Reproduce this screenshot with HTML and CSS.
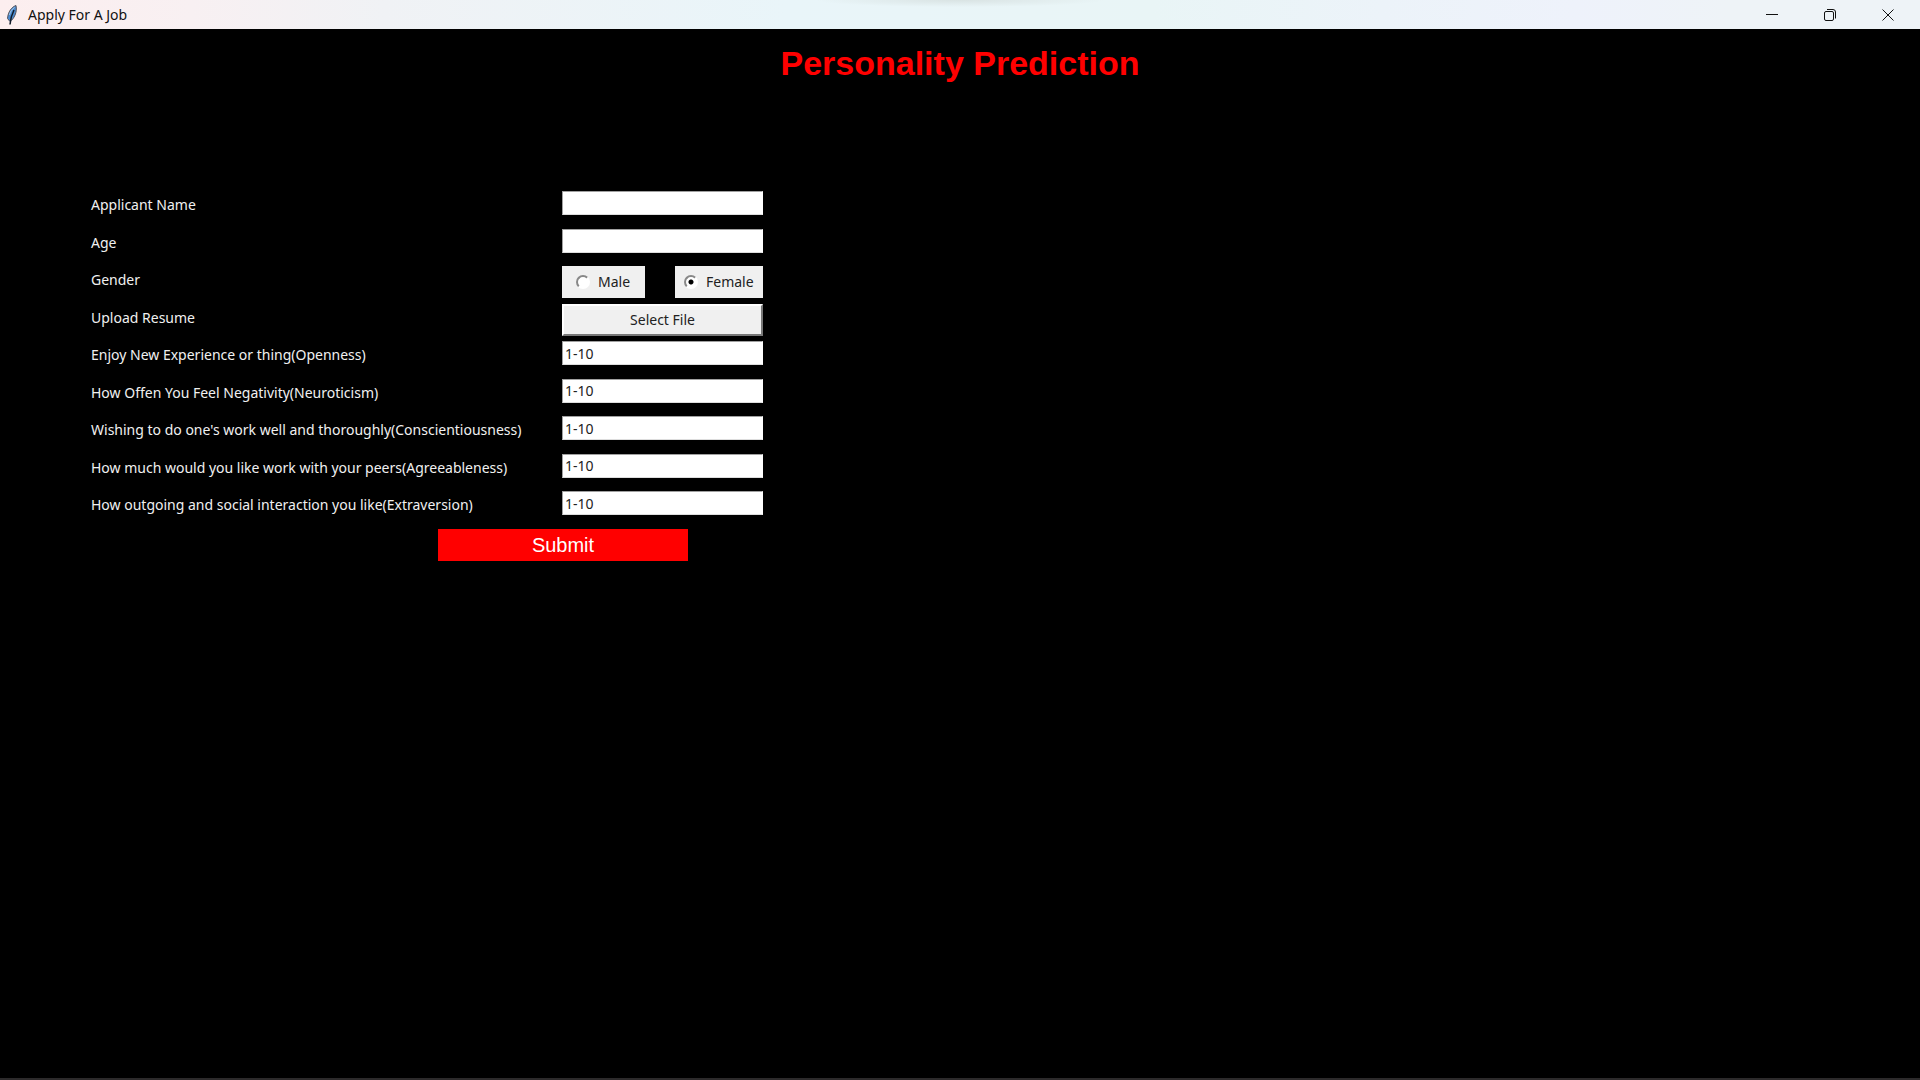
FILE: index.html
```
<!DOCTYPE html>
<html lang="en">
<head>
<meta charset="utf-8">
<title>Apply For A Job</title>
<link rel="stylesheet" href="styles.css">
</head>
<body>
<div class="window">
  <header class="titlebar">
    <svg class="feather" viewBox="0 0 12 20" aria-hidden="true">
      <path d="M10 .5C5.500 2 2 7 1.500 13.500L4 16.500C8 14 11.500 7 10 .5Z" fill="#4b8ad0" stroke="#55535c"/>
      <path d="M8 5C6.500 8 4.500 12 4 19.500" fill="none" stroke="#101a28" stroke-width="1.500"/>
      <path d="M8.500 2.500C6 4 4 7 3.500 10" fill="none" stroke="#a9cdeb"/>
    </svg>
    <span class="caption">Apply For A Job</span>
    <div class="controls">
      <button class="control" type="button" aria-label="Minimize"><svg viewBox="0 0 12 12"><path d="M0 5.500H12"/></svg></button>
      <button class="control" type="button" aria-label="Restore"><svg viewBox="0 0 12 12"><rect x=".5" y="2.500" width="9" height="9" rx="1.500"/><path d="M3 .5H9Q11.500.5 11.500 3V9.500"/></svg></button>
      <button class="control" type="button" aria-label="Close"><svg viewBox="0 0 12 12"><path d="M.5.5L11.500 11.500M11.500.5L.5 11.500"/></svg></button>
    </div>
  </header>
  <main class="content">
    <h1 class="heading">Personality Prediction</h1>
    <form class="form">
      <div class="fields">
        <label class="label" for="name">Applicant Name</label>
        <input class="entry" id="name" type="text">
        <label class="label" for="age">Age</label>
        <input class="entry" id="age" type="text">
        <span class="label" id="gender">Gender</span>
        <div class="choices" role="radiogroup" aria-labelledby="gender">
          <label class="choice"><input class="radio" type="radio" name="gender">Male</label>
          <label class="choice"><input class="radio" type="radio" name="gender" checked>Female</label>
        </div>
        <label class="label" for="resume">Upload Resume</label>
        <button class="file" id="resume" type="button">Select File</button>
        <label class="label" for="openness">Enjoy New Experience or thing(Openness)</label>
        <input class="entry" id="openness" type="text" value="1-10">
        <label class="label" for="neuroticism">How Offen You Feel Negativity(Neuroticism)</label>
        <input class="entry" id="neuroticism" type="text" value="1-10">
        <label class="label" for="conscientiousness">Wishing to do one's work well and thoroughly(Conscientiousness)</label>
        <input class="entry" id="conscientiousness" type="text" value="1-10">
        <label class="label" for="agreeableness">How much would you like work with your peers(Agreeableness)</label>
        <input class="entry" id="agreeableness" type="text" value="1-10">
        <label class="label" for="extraversion">How outgoing and social interaction you like(Extraversion)</label>
        <input class="entry" id="extraversion" type="text" value="1-10">
      </div>
      <button class="submit" type="submit">Submit</button>
    </form>
  </main>
</div>
</body>
</html>
```

FILE: styles.css
```
* { box-sizing: border-box; }

body {
  margin: 0;
  background: #000;
  font: 14px/20px "Noto Sans", "Open Sans", sans-serif;
}

.window {
  display: flex;
  flex-direction: column;
  min-height: 100vh;
  border-bottom: 2px solid #2c2a2b;
}

.titlebar {
  display: flex;
  align-items: center;
  height: 29px;
  padding: 0 3px 0 6px;
  color: #111;
  background:
    radial-gradient(ellipse 145px 7px at 50% 0, #d9e3e3, transparent) no-repeat,
    linear-gradient(90deg, #fceeef 0, #f8f0f2 10%, #f0f2f5 20%, #e9f5f9 41%, #e9f5f6 60%, #ecf3f9 72%, #eef2fb 82%, #eef3f7 90%);
}

.caption { font-size: 14px; }

.feather {
  width: 12px;
  height: 20px;
  margin-right: 10px;
}

.controls {
  display: flex;
  align-self: stretch;
  margin-left: auto;
}

.control {
  display: grid;
  place-items: center;
  width: 58px;
  padding: 0;
  border: 0;
  background: none;
}

.control svg {
  width: 12px;
  height: 12px;
  fill: none;
  stroke: #111;
}

.content { flex: 1; }

.heading {
  margin: 14px 0 108px;
  color: #f00;
  font: bold 34px/40px "Liberation Sans", Arial, sans-serif;
  text-align: center;
}

.form {
  width: 672px;
  margin-left: 91px;
}

.fields {
  display: grid;
  grid-template-columns: 471px 201px;
  grid-template-rows: repeat(9, 1fr);
  align-items: start;
  min-height: 338px;
}

.label {
  padding-top: 4px;
  color: #f0f0f0;
  white-space: nowrap;
}

.entry {
  width: 100%;
  height: 24px;
  padding: 0 2px;
  border: 1px solid #a0a0a0;
  border-right-color: #fff;
  border-bottom-color: #ddd;
  background: #fff;
  color: #222;
  font: inherit;
}

.choices {
  display: grid;
  grid-template-columns: 83px 88px;
  justify-content: space-between;
}

.choice {
  display: flex;
  align-items: center;
  gap: 8px;
  height: 32px;
  padding-left: 14px;
  background: #f0f0f0;
  color: #222;
}

.choice + .choice { padding-left: 9px; }

.radio {
  appearance: none;
  width: 14px;
  height: 14px;
  margin: 0;
  border: 2px solid;
  border-color: #888 #fff #fff #888;
  border-radius: 50%;
  background: #fff;
}

.radio:checked { background: radial-gradient(circle, #000 2px, #fff 3px); }

.file {
  width: 100%;
  height: 32px;
  padding: 0;
  border: 2px solid;
  border-color: #fff #777 #777 #fff;
  background: #f0f0f0;
  color: #222;
  font: inherit;
}

.submit {
  display: block;
  width: 250px;
  height: 32px;
  margin-left: 347px;
  padding: 0;
  border: 0;
  background: #f00;
  color: #fff;
  font: 20px/32px "Liberation Sans", Arial, sans-serif;
}
```
